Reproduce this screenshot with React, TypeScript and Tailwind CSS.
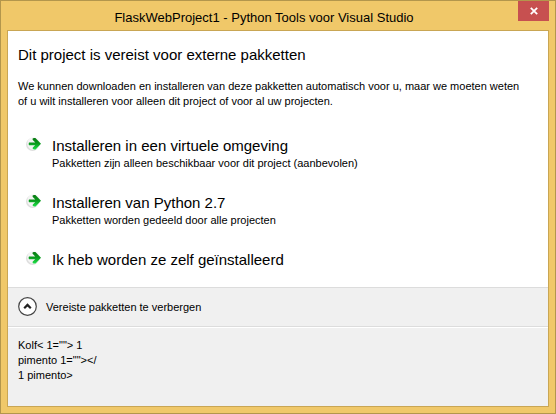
import { useId, useState } from 'react';

function GreenArrow() {
  const fill = useId();
  return (
    <svg className="h-4 w-4 shrink-0" viewBox="0 0 16 16" aria-hidden="true">
      <defs>
        <linearGradient id={fill} x1="0" y1="0" x2="0" y2="1">
          <stop offset="0" stopColor="#087a12" />
          <stop offset="0.5" stopColor="#0a9c1e" />
          <stop offset="1" stopColor="#1fe04a" />
        </linearGradient>
      </defs>
      <circle cx="6.5" cy="8.5" r="6.5" fill="#dedede" />
      <circle cx="7.5" cy="7.5" r="6.3" fill="#f4f4f4" />
      <path
        d="M3 6.4H9.2L6.6 3.8Q6 2 8 2H9.4L15 7.7L9.6 13.4H8Q6 13.4 6.8 11.6L9.2 9.2H3Q2.2 7.8 3 6.4Z"
        fill={`url(#${fill})`}
      />
    </svg>
  );
}

function Option({ title, detail }: { title: string; detail?: string }) {
  return (
    <button type="button" className="flex w-full gap-2.5 text-left">
      <GreenArrow />
      <span className="flex flex-col">
        <span className="text-[15px] leading-5">{title}</span>
        {detail && <span className="text-[11px] leading-[14px]">{detail}</span>}
      </span>
    </button>
  );
}

export default function App() {
  const [open, setOpen] = useState(true);

  return (
    <div className="flex min-h-screen flex-col border border-[#b3964c] bg-[#f0c869] px-1.5 pb-1.5 font-['Liberation_Sans',Arial,sans-serif] text-black">
      <header className="relative flex h-[29px] items-center justify-center pt-1 pr-7">
        <h1 className="text-[13px] leading-5">FlaskWebProject1 - Python Tools voor Visual Studio</h1>
        <button
          type="button"
          aria-label="Sluiten"
          className="absolute top-0 right-0 flex h-5 w-[31px] items-center justify-center bg-[#c75050]"
        >
          <svg className="h-2 w-2" viewBox="0 0 8 8" aria-hidden="true">
            <path d="M0.8 0.8L7.2 7.2M7.2 0.8L0.8 7.2" stroke="#fff" strokeWidth="1.8" />
          </svg>
        </button>
      </header>

      <main className="flex grow flex-col border border-[#c9a654] bg-[#f0f0f0]">
        <section className="bg-white px-2.5 pt-3.5 pb-[17px]">
          <h2 className="text-[15px] leading-5">Dit project is vereist voor externe pakketten</h2>
          <p className="mt-3.5 pr-3 text-[11px] leading-[15px]">
            We kunnen downloaden en installeren van deze pakketten automatisch voor u, maar we moeten weten of u wilt
            installeren voor alleen dit project of voor al uw projecten.
          </p>
          <div className="mt-[27px] flex flex-col gap-[23px] pl-2">
            <Option title="Installeren in een virtuele omgeving" detail="Pakketten zijn alleen beschikbaar voor dit project (aanbevolen)" />
            <Option title="Installeren van Python 2.7" detail="Pakketten worden gedeeld door alle projecten" />
            <Option title="Ik heb worden ze zelf geïnstalleerd" />
          </div>
        </section>

        <button
          type="button"
          aria-expanded={open}
          aria-controls="packages"
          onClick={() => setOpen(!open)}
          className="flex h-10 items-center gap-2 border-y border-[#dcdcdc] px-2.5 text-left text-[11px] leading-4"
        >
          <svg className="h-5 w-5" viewBox="0 0 20 20" fill="none" aria-hidden="true">
            <circle cx="9.5" cy="9.5" r="8.8" fill="#fff" stroke="#444" strokeWidth="1.2" />
            <path d="M6.2 11.2L9.5 7.9L12.8 11.2" stroke="#222" strokeWidth="2.2" />
          </svg>
          Vereiste pakketten te verbergen
        </button>
        {open && (
          <div id="packages" className="border-t border-white px-2.5 pt-2.5 text-[11px] leading-[15px]">
            <p>Kolf&lt; 1=""&gt; 1</p>
            <p>pimento 1=""&gt;&lt;/</p>
            <p>1 pimento&gt;</p>
          </div>
        )}
      </main>
    </div>
  );
}
